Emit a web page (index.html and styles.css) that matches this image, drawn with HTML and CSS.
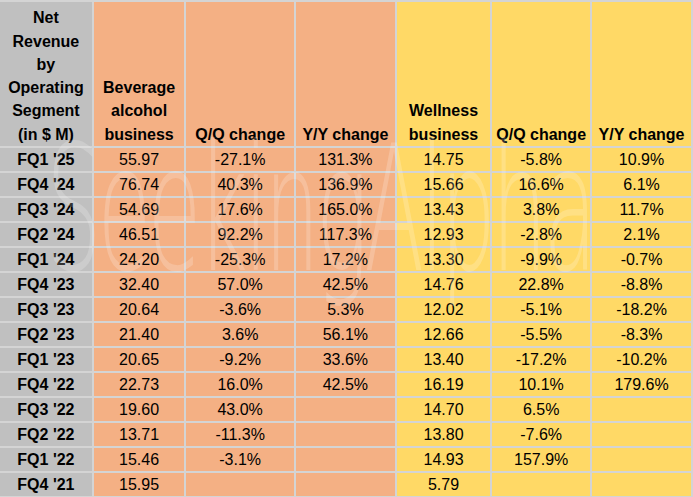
FILE: index.html
```html
<!DOCTYPE html>
<html>
<head>
<meta charset="utf-8">
<link rel="stylesheet" href="styles.css">
</head>
<body>
<div class="sheet">
<table class="rev">
<colgroup>
<col class="c1"><col class="c2"><col class="c3"><col class="c4"><col class="c5"><col class="c6"><col class="c7">
</colgroup>
<thead>
<tr>
<th class="seg seg-head">Net Revenue by Operating Segment (in $ M)</th>
<th class="bev">Beverage alcohol business</th>
<th class="bev">Q/Q change</th>
<th class="bev">Y/Y change</th>
<th class="wel">Wellness business</th>
<th class="wel">Q/Q change</th>
<th class="wel">Y/Y change</th>
</tr>
</thead>
<tbody>
<tr><th class="seg">FQ1 '25</th><td class="bev">55.97</td><td class="bev">-27.1%</td><td class="bev">131.3%</td><td class="wel">14.75</td><td class="wel">-5.8%</td><td class="wel">10.9%</td></tr>
<tr><th class="seg">FQ4 '24</th><td class="bev">76.74</td><td class="bev">40.3%</td><td class="bev">136.9%</td><td class="wel">15.66</td><td class="wel">16.6%</td><td class="wel">6.1%</td></tr>
<tr><th class="seg">FQ3 '24</th><td class="bev">54.69</td><td class="bev">17.6%</td><td class="bev">165.0%</td><td class="wel">13.43</td><td class="wel">3.8%</td><td class="wel">11.7%</td></tr>
<tr><th class="seg">FQ2 '24</th><td class="bev">46.51</td><td class="bev">92.2%</td><td class="bev">117.3%</td><td class="wel">12.93</td><td class="wel">-2.8%</td><td class="wel">2.1%</td></tr>
<tr><th class="seg">FQ1 '24</th><td class="bev">24.20</td><td class="bev">-25.3%</td><td class="bev">17.2%</td><td class="wel">13.30</td><td class="wel">-9.9%</td><td class="wel">-0.7%</td></tr>
<tr><th class="seg">FQ4 '23</th><td class="bev">32.40</td><td class="bev">57.0%</td><td class="bev">42.5%</td><td class="wel">14.76</td><td class="wel">22.8%</td><td class="wel">-8.8%</td></tr>
<tr><th class="seg">FQ3 '23</th><td class="bev">20.64</td><td class="bev">-3.6%</td><td class="bev">5.3%</td><td class="wel">12.02</td><td class="wel">-5.1%</td><td class="wel">-18.2%</td></tr>
<tr><th class="seg">FQ2 '23</th><td class="bev">21.40</td><td class="bev">3.6%</td><td class="bev">56.1%</td><td class="wel">12.66</td><td class="wel">-5.5%</td><td class="wel">-8.3%</td></tr>
<tr><th class="seg">FQ1 '23</th><td class="bev">20.65</td><td class="bev">-9.2%</td><td class="bev">33.6%</td><td class="wel">13.40</td><td class="wel">-17.2%</td><td class="wel">-10.2%</td></tr>
<tr><th class="seg">FQ4 '22</th><td class="bev">22.73</td><td class="bev">16.0%</td><td class="bev">42.5%</td><td class="wel">16.19</td><td class="wel">10.1%</td><td class="wel">179.6%</td></tr>
<tr><th class="seg">FQ3 '22</th><td class="bev">19.60</td><td class="bev">43.0%</td><td class="bev"></td><td class="wel">14.70</td><td class="wel">6.5%</td><td class="wel"></td></tr>
<tr><th class="seg">FQ2 '22</th><td class="bev">13.71</td><td class="bev">-11.3%</td><td class="bev"></td><td class="wel">13.80</td><td class="wel">-7.6%</td><td class="wel"></td></tr>
<tr><th class="seg">FQ1 '22</th><td class="bev">15.46</td><td class="bev">-3.1%</td><td class="bev"></td><td class="wel">14.93</td><td class="wel">157.9%</td><td class="wel"></td></tr>
<tr><th class="seg">FQ4 '21</th><td class="bev">15.95</td><td class="bev"></td><td class="bev"></td><td class="wel">5.79</td><td class="wel"></td><td class="wel"></td></tr>
</tbody>
</table>
<div class="watermark" aria-hidden="true">SeekingAlpha</div>
</div>
</body>
</html>
```
FILE: styles.css
```css
html, body {
  margin: 0;
  padding: 0;
  background: #ffffff;
  overflow: hidden;
}

.sheet {
  position: relative;
  width: 693px;
  height: 497px;
  overflow: hidden;
}

.rev {
  table-layout: fixed;
  border-collapse: separate;
  border-spacing: 2px;
  margin: 0 0 0 -2px;
  background: #d4d4d4;
  font-family: "Liberation Sans", Arial, sans-serif;
  font-size: 16px;
  color: #000;
}

.c1 { width: 92px; }
.c2 { width: 91px; }
.c3 { width: 109px; }
.c4 { width: 100px; }
.c5 { width: 94px; }
.c6 { width: 99px; }
.c7 { width: 100px; }

.rev th,
.rev td {
  padding: 0;
  text-align: center;
  vertical-align: middle;
  overflow: hidden;
  white-space: nowrap;
}

.rev thead th {
  height: 144px;
  vertical-align: bottom;
  line-height: 23.3px;
  font-weight: bold;
  white-space: normal;
}

.rev thead th.seg-head {
  padding: 0 5px;
}

.rev tbody th,
.rev tbody td {
  height: 23px;
  line-height: 23px;
}

.rev tbody th {
  font-weight: bold;
}

.seg { background: #c0c0c0; }
.bev { background: #f4b084; }
.wel { background: #ffd966; }

.watermark {
  position: absolute;
  left: 46px;
  top: 122px;
  font-family: "DejaVu Sans", sans-serif;
  font-weight: 200;
  font-size: 175px;
  letter-spacing: -8px;
  line-height: 1;
  color: rgba(255, 255, 255, 0.2);
  transform: scaleX(0.5);
  transform-origin: left top;
  pointer-events: none;
  white-space: nowrap;
}
```
